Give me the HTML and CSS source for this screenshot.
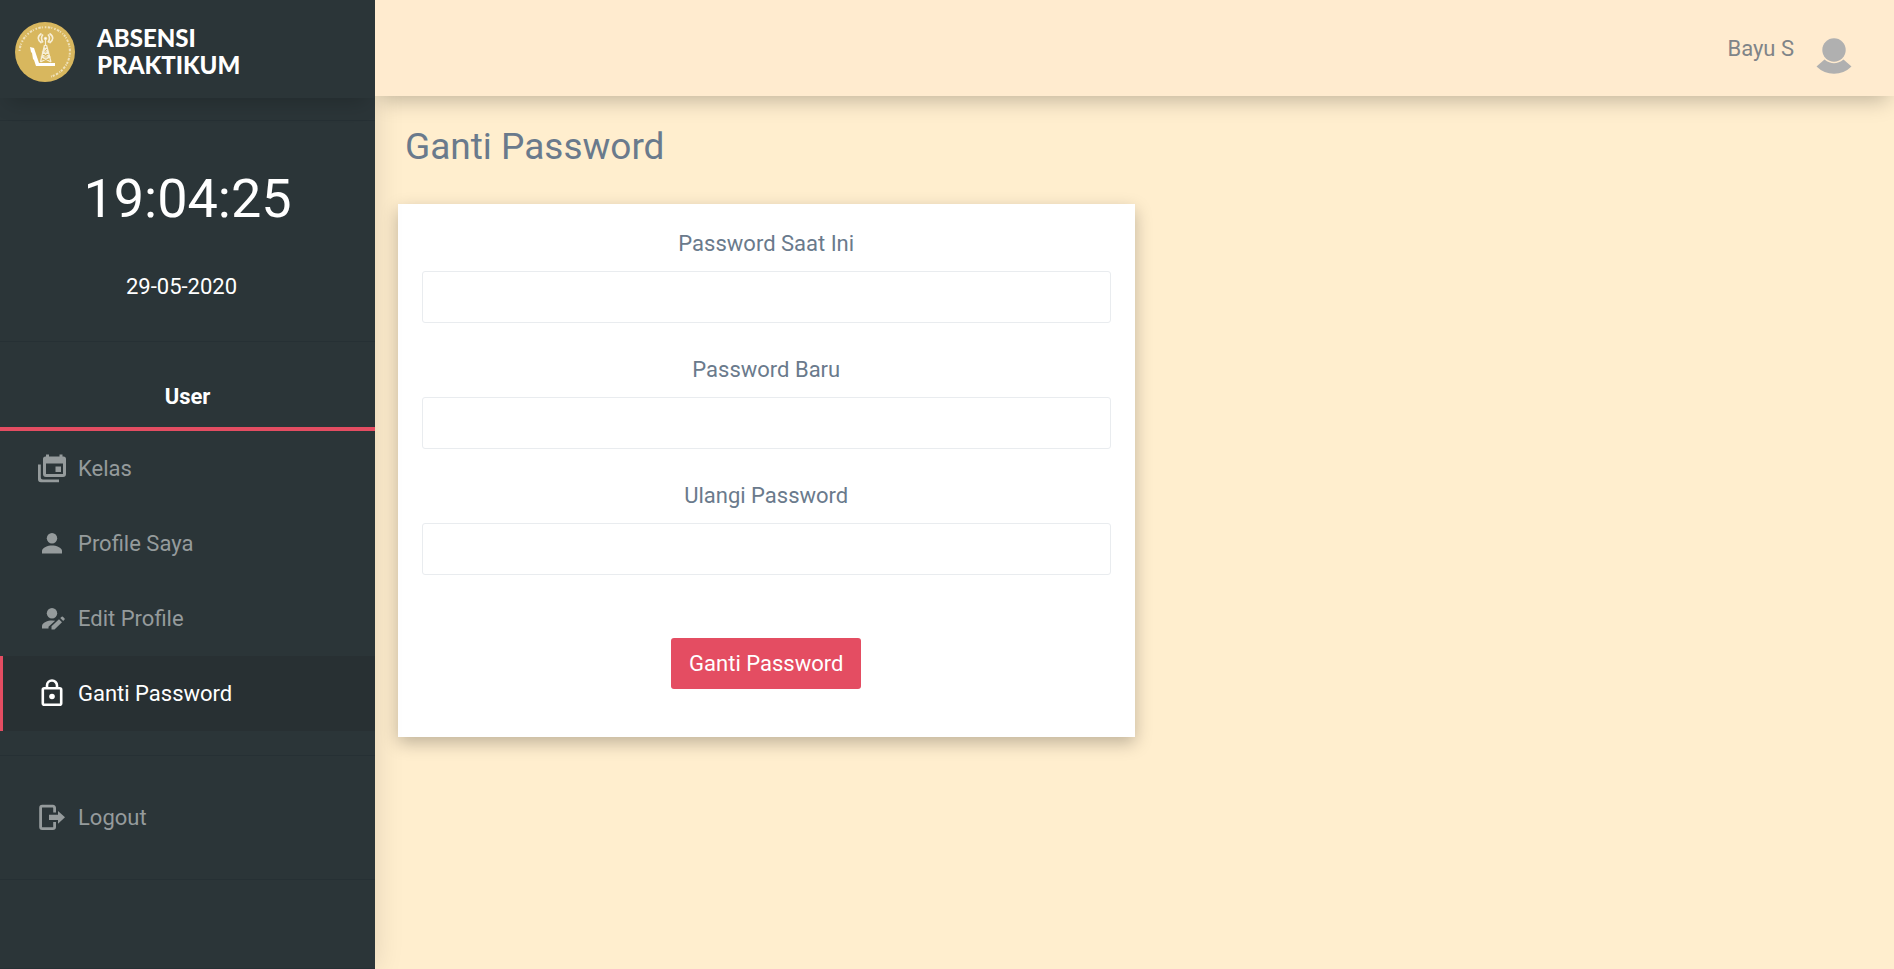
FILE: index.html
```html
<!DOCTYPE html>
<html lang="id">
<head>
<meta charset="utf-8">
<title>Ganti Password - Absensi Praktikum</title>
<link rel="stylesheet" href="styles.css">
</head>
<body>
<div class="layout">
  <aside class="sidebar">
    <a class="brand" href="#">
      <svg class="brand-logo" viewBox="0 0 60 60" aria-hidden="true">
        <circle cx="30" cy="30" r="30" fill="#d8b75e"/>
        <g fill="none" stroke="#f7efd8">
          <path d="M4.500 29A26 26 0 0 1 48 12" stroke-width="2" stroke-dasharray="1.500 1.500 2.500 1 1 2" opacity=".75"/>
          <path d="M49 13A26 26 0 0 1 36 54.500" stroke-width="2" stroke-dasharray="2 1 1 1.500 2.500 1.500" opacity=".75"/>
          <path d="M30.500 18V24M29.500 23L25.500 40M31.500 23L36 40M27.500 30H33.500M26.500 35H35M28.500 25L33.500 30L26.500 35L36 40M32.500 25L27.500 30L35 35L25.500 40" stroke-width="1.200"/>
          <path d="M28 12.500Q25 16 28 20.500M33 12.500Q36 16 33 20.500M26.500 11.500Q20 16 26.500 21M34.500 11.500Q41 16 34.500 21" stroke-width="1.600"/>
          <circle cx="30.500" cy="16.500" r="1.200" fill="#fff"/>
        </g>
        <path d="M15 25L19 26L24 41H40V44H21L19 38L18 37L17 31L16 30Z" fill="#fff"/>
      </svg>
      <span class="brand-name">ABSENSI<br>PRAKTIKUM</span>
    </a>
    <div class="clock">
      <time class="clock-time">19:04:25</time>
      <time class="clock-date" datetime="2020-05-29">29-05-2020</time>
    </div>
    <h2 class="menu-title">User</h2>
    <nav class="menu">
      <a class="menu-item" href="#">
        <svg class="icon" viewBox="0 0 32 32" aria-hidden="true"><path fill="currentColor" fill-rule="evenodd" d="M10 1.500h3v2h10.500v-2h3v2h1q2.500 0 2.500 2.500v15q0 3-3 3H10q-3 0-3-3V6q0-2.500 2.500-2.500h.5zM10 10.500v10.500h17V10.500zM19.500 13.500h5.500v5.500h-5.500zM2 11.500h2.800v13q0 2 2 2H23v2.800H5q-3 0-3-3z"/></svg>
        <span>Kelas</span>
      </a>
      <a class="menu-item" href="#">
        <svg class="icon" viewBox="0 0 32 32" aria-hidden="true"><circle cx="16" cy="10.200" r="5.200" fill="currentColor"/><path fill="currentColor" d="M6 25.500V23C6 19.500 12 17.500 16 17.500s10 2 10 5.500v2.500z"/></svg>
        <span>Profile Saya</span>
      </a>
      <a class="menu-item" href="#">
        <svg class="icon" viewBox="0 0 32 32" aria-hidden="true"><circle cx="16" cy="10.200" r="5.200" fill="currentColor"/><path fill="currentColor" d="M6 25.500V23C6 19.500 12 17.500 16 17.500l3.200.3-6.700 6v1.700zM15.500 26.500v-3.200l7.500-7.100 3 3-7.500 7.300zM24.200 15.100l1.500-1.400q.6-.5 1.200 0l1.700 1.700q.5.600 0 1.200l-1.400 1.500z"/></svg>
        <span>Edit Profile</span>
      </a>
      <a class="menu-item menu-item-active" href="#" aria-current="page">
        <svg class="icon" viewBox="0 0 32 32" aria-hidden="true"><g fill="none" stroke="currentColor" stroke-width="2.600"><rect x="6.800" y="10.300" width="18.400" height="16.400" rx="1.500"/><path d="M11 10V7.500a5 5 0 0 1 10 0V10"/></g><circle cx="16" cy="18.500" r="2.800" fill="currentColor"/></svg>
        <span>Ganti Password</span>
      </a>
    </nav>
    <nav class="menu menu-secondary">
      <a class="menu-item" href="#">
        <svg class="icon" viewBox="0 0 32 32" aria-hidden="true"><path fill="none" stroke="currentColor" stroke-width="2.800" d="M18.600 10.500V6q0-1.800-1.800-1.800H6.200Q4.600 4.200 4.600 6v19q0 1.600 1.600 1.600h10.600q1.800 0 1.800-1.600v-5"/><path fill="currentColor" d="M13 12.800h9V9l7 6.300-7 6.500v-3.800h-9z"/></svg>
        <span>Logout</span>
      </a>
    </nav>
  </aside>
  <div class="page">
    <header class="topbar">
      <span class="user-name">Bayu S</span>
      <svg class="avatar" viewBox="0 0 36 36" aria-hidden="true"><circle cx="18" cy="12" r="11.700" fill="#b0b0b0"/><path fill="#b0b0b0" d="M8.500 21.500Q18 29 27.500 21.500L35.500 28.500Q28 35.800 18 35.800T.5 28.500z"/></svg>
    </header>
    <main class="content">
      <h1 class="page-title">Ganti Password</h1>
      <form class="card">
        <div class="field">
          <label for="current">Password Saat Ini</label>
          <input id="current" type="password">
        </div>
        <div class="field">
          <label for="new">Password Baru</label>
          <input id="new" type="password">
        </div>
        <div class="field">
          <label for="repeat">Ulangi Password</label>
          <input id="repeat" type="password">
        </div>
        <button class="submit" type="submit">Ganti Password</button>
      </form>
    </main>
  </div>
</div>
</body>
</html>
```
FILE: styles.css
```css
* {
  box-sizing: border-box;
}

body {
  margin: 0;
  background: #ffeece;
  color: #6a7a8c;
  font-family: Roboto, "Liberation Sans", sans-serif;
  font-size: 22px;
  line-height: 32px;
}

a {
  color: inherit;
  text-decoration: none;
}

.layout {
  display: flex;
  min-height: 100vh;
}

.sidebar {
  position: relative;
  z-index: 1;
  flex: 0 0 375px;
  border-bottom: 1px solid #263034;
  background: #2b3538;
  color: #fff;
  box-shadow: 0 0 28px rgba(0, 0, 0, 0.12);
}

.brand {
  display: flex;
  align-items: center;
  gap: 22px;
  height: 98px;
  padding: 6px 15px 0;
  box-shadow: 0 12px 20px -8px rgba(0, 0, 0, 0.2);
  clip-path: inset(0 0 -40px 0);
}

.brand-logo {
  width: 60px;
  height: 60px;
}

.brand-name {
  padding-bottom: 2px;
  font-family: Lato, sans-serif;
  font-size: 24px;
  font-weight: 900;
  line-height: 27px;
}

.clock {
  display: flex;
  flex-direction: column;
  align-items: center;
  gap: 40px;
  height: 222px;
  margin-top: 22px;
  padding-top: 46px;
  border-top: 1px solid #263034;
  border-bottom: 1px solid #263034;
}

.clock-time {
  font-size: 54px;
  line-height: 64px;
}

.clock-date {
  padding-right: 12px;
}

.menu-title {
  margin: 0;
  padding: 39px 0 14px;
  border-bottom: 4px solid #e44d62;
  font-size: 22px;
  line-height: 32px;
  font-weight: 700;
  text-align: center;
}

.menu {
  padding-bottom: 24px;
  border-bottom: 1px solid #263034;
}

.menu-secondary {
  padding-top: 24px;
}

.menu-item {
  display: flex;
  align-items: center;
  gap: 10px;
  height: 75px;
  padding-left: 33px;
  border-left: 3px solid transparent;
  color: #959b9c;
}

.menu-item-active {
  border-left-color: #e44d62;
  background: #283033;
  color: #fff;
}

.icon {
  width: 32px;
  height: 32px;
}

.page {
  flex: 1;
  min-width: 0;
}

.topbar {
  position: relative;
  z-index: 2;
  display: flex;
  justify-content: flex-end;
  gap: 22px;
  height: 96px;
  padding: 33px 42px 0;
  background: #ffebcf;
  box-shadow: 0 10px 20px -6px rgba(0, 0, 0, 0.25);
  color: #808488;
  clip-path: inset(0 0 -40px 0);
}

.avatar {
  width: 36px;
  height: 36px;
  margin-top: 5px;
}

.content {
  padding: 26px 23px;
}

.page-title {
  margin: 0 7px 32px;
  font-size: 37px;
  font-weight: 400;
  line-height: 50px;
}

.card {
  display: flex;
  flex-direction: column;
  width: 50%;
  padding: 24px 24px 48px;
  background: #fff;
  box-shadow: 0 6px 16px rgba(0, 0, 0, 0.25);
}

.field {
  display: flex;
  flex-direction: column;
  gap: 11px;
  margin-bottom: 31px;
  text-align: center;
}

.field input {
  width: 100%;
  height: 52px;
  padding: 8px 16px;
  border: 1px solid #e9ecef;
  border-radius: 3px;
  background: #fff;
  color: inherit;
  font: inherit;
}

.submit {
  align-self: center;
  margin-top: 32px;
  padding: 10px 18px 9px;
  border: 0;
  border-radius: 3px;
  background: #e44d62;
  color: #fff;
  font: inherit;
  line-height: 32px;
}
```
